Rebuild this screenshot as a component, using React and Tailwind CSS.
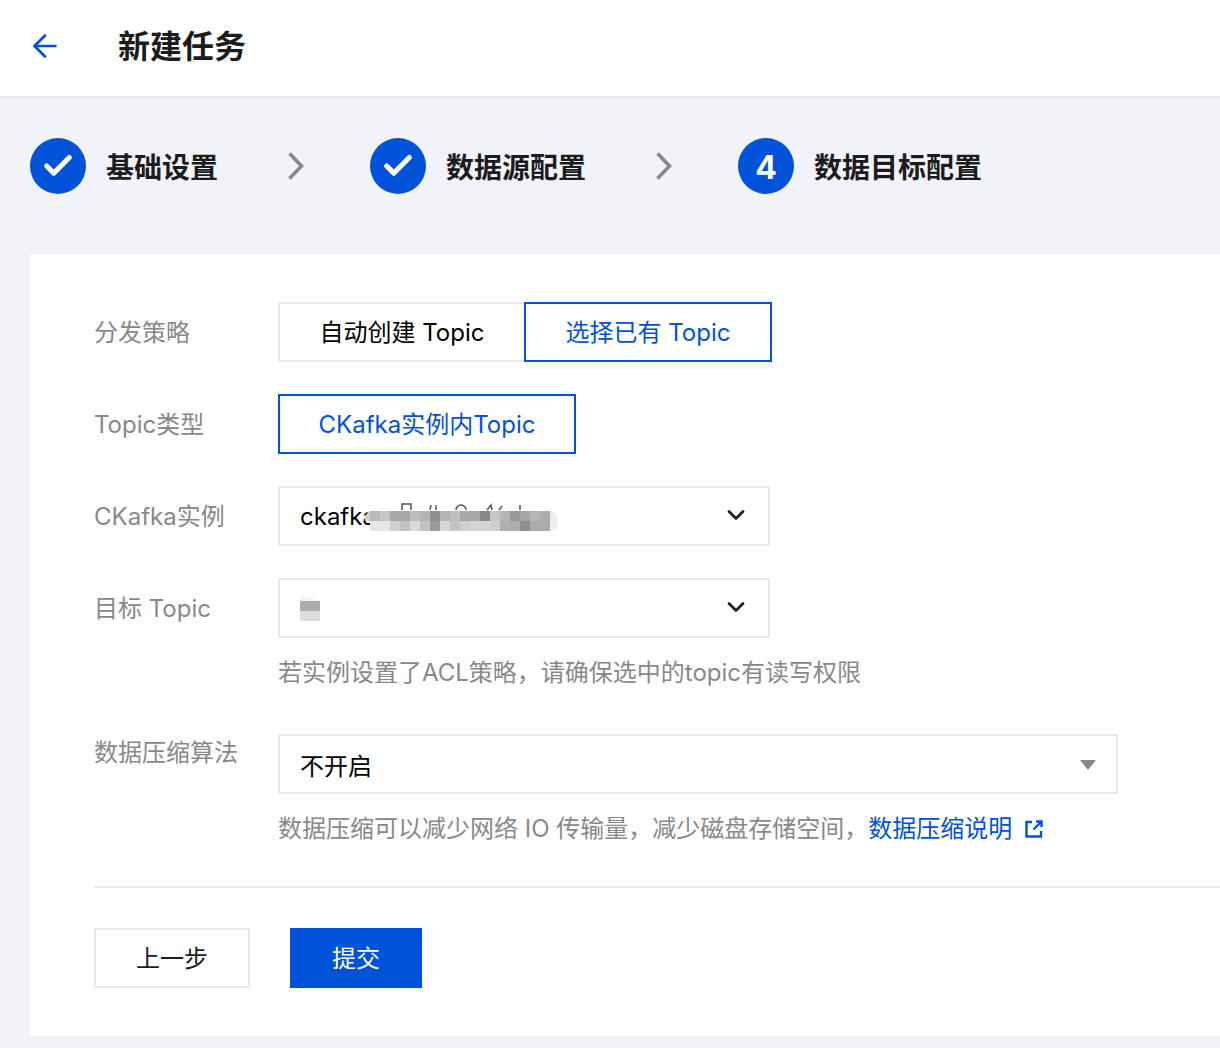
import React from 'react';
import { ArrowLeft, Check, ChevronDown } from 'lucide-react';

const FONT = "font-['Inter','Noto_Sans_CJK_SC',sans-serif]";

const mosaicTop = ['#b9b9b9', '#c6c6c6', '#a8a8a8', '#a8a8a8', '#bdbdbd', '#b4b4b4', '#909090', '#b5b5b5', '#c0c0c0', '#a9a9a9', '#a9a9a9', '#888888', '#c6c6c6', '#b5b5b5', '#9a9a9a', '#a5a5a5', '#b5b5b5', '#adadad'];
const mosaicBottom = ['#e6e6e6', '#e6e6e6', '#cfcfcf', '#c2c2c2', '#dadada', '#c2c2c2', '#9a9a9a', '#d6d6d6', '#c4c4c4', '#cfcfcf', '#d4d4d4', '#d4d4d4', '#cfcfcf', '#b0b0b0', '#adadad', '#8f8f8f', '#ababab', '#ababab'];

// pixelated redaction over the instance name
const Mosaic = () => (
    <svg width="195" height="28" viewBox="0 0 195 28" className="absolute left-[83px] top-[15px]">
        <path d="M39 7V1h9v6M67 7l1-5M73 7V2M93 7a5 5 0 0 1 10 0M124 7l4-5 1 5M136 7l3-4M157 7V2" fill="none" stroke="#555555" strokeWidth="1.5" />
        <path d="M7 8h180a8 8 0 0 1 8 8v4a8 8 0 0 1-8 8H7z" fill="#ffffff" />
        <path d="M2 18a9 9 0 0 1 5-10v10z" fill="#d0d0d0" />
        {mosaicTop.map((c, i) => <rect key={i} x={7 + i * 10} y="8" width="10" height="10" fill={c} />)}
        {mosaicBottom.map((c, i) => <rect key={i} x={7 + i * 10} y="18" width="10" height="10" fill={c} />)}
        <path d="M187 8a8 8 0 0 1 8 8v4a8 8 0 0 1-8 8z" fill="#eeeeee" />
    </svg>
);

const StepArrow = ({ className }) => (
    <svg width="16" height="28" viewBox="0 0 16 28" fill="none" stroke="#888888" strokeWidth="3.6" className={className}>
        <path d="M1.5 1.5L13.5 14L1.5 26.5" />
    </svg>
);

const Step = ({ label, num, className }) => (
    <div className={`flex items-center ${className}`}>
        <div className="w-14 h-14 rounded-full bg-[#0052d9] flex items-center justify-center text-white">
            {num ? <span className="mt-1 text-[32px] font-bold">{num}</span> : <Check size={34} strokeWidth={3.6} />}
        </div>
        <span className="ml-5 mt-1 text-[28px] font-bold text-[#1c1c1c] leading-none">{label}</span>
    </div>
);

const Row = ({ label, children, className = '', labelClass = 'h-[60px]' }) => (
    <div className={`flex ${className}`}>
        <div className={`w-[184px] pt-[2px] flex items-center text-2xl text-[#888888] shrink-0 ${labelClass}`}>{label}</div>
        <div>{children}</div>
    </div>
);

const SelectBox = ({ children }) => (
    <div className="relative w-[492px] h-[60px] border-2 border-[#e7eaef] bg-white flex items-center justify-between pl-5 pr-[18px] text-2xl text-black">
        {children}
        <ChevronDown size={28} strokeWidth={2.4} className="text-[#222222] ml-auto mb-[2px]" />
    </div>
);

export default function App() {
    return (
        <div className={`w-[1220px] h-[1048px] overflow-hidden bg-[#f2f3f8] ${FONT}`}>
            <div className="h-[98px] bg-white border-b-2 border-[#e7eaef] flex items-center pb-[2px]">
                <ArrowLeft size={36} strokeWidth={1.8} className="ml-[27px] mb-[2px] text-[#0052d9]" />
                <h1 className="ml-[55px] text-[32px] font-bold text-[#1c1c1c]">新建任务</h1>
            </div>

            {/* Steps */}
            <div className="flex items-center pl-[30px] pt-10 h-[156px] pb-[60px]">
                <Step label="基础设置" />
                <StepArrow className="ml-[70px]" />
                <Step label="数据源配置" className="ml-[66px]" />
                <StepArrow className="ml-[70px]" />
                <Step label="数据目标配置" num="4" className="ml-[66px]" />
            </div>

            {/* Form card */}
            <div className="ml-[30px] h-[782px] bg-white pl-16 pt-12">
                <Row label="分发策略" className="mb-8">
                    <div className="flex text-2xl">
                        <div className="w-[246px] h-[60px] pt-[2px] border-2 border-r-0 border-[#e7eaef] flex items-center justify-center text-black">自动创建 Topic</div>
                        <div className="w-[248px] h-[60px] pt-[2px] border-2 border-[#0052d9] flex items-center justify-center text-[#0052d9]">选择已有 Topic</div>
                    </div>
                </Row>
                <Row label="Topic类型" className="mb-8">
                    <div className="w-[298px] h-[60px] pt-[2px] border-2 border-[#0052d9] flex items-center justify-center text-2xl text-[#0052d9]">CKafka实例内Topic</div>
                </Row>
                <Row label="CKafka实例" className="mb-8">
                    <SelectBox>
                        <span className="mt-[2px]">ckafka</span>
                        <Mosaic />
                    </SelectBox>
                </Row>
                <Row label="目标 Topic" className="mb-5">
                    <SelectBox>
                        <svg width="20" height="26" viewBox="0 0 20 26" className="block">
                            <path d="M0 0l20 6v4H0z" fill="#f4f4f4" />
                            <rect x="0" y="6" width="20" height="10" fill="#ababab" />
                            <path d="M0 16h20v10H4l-4-1z" fill="#dcdcdc" />
                        </svg>
                    </SelectBox>
                    <p className="mt-5 text-2xl leading-[30px] text-[#888888]">若实例设置了ACL策略，请确保选中的topic有读写权限</p>
                </Row>
                <Row label="数据压缩算法" labelClass="h-9" className="mt-[46px]">
                    <div className="w-[840px] h-[60px] border-2 border-[#e7eaef] flex items-center justify-between pl-5 pr-[20px] text-2xl text-black">
                        <span className="mt-[6px]">不开启</span>
                        <svg width="16" height="10" viewBox="0 0 16 10" className="mt-[2px]"><path d="M0 0h16l-8 10z" fill="#888888" /></svg>
                    </div>
                    <p className="mt-5 flex items-center text-2xl leading-[30px] text-[#888888]">
                        数据压缩可以减少网络 IO 传输量，减少磁盘存储空间，
                        <span className="text-[#0052d9]">数据压缩说明</span>
                        <svg width="18" height="18" viewBox="0 0 18 18" fill="none" stroke="#0052d9" strokeWidth="2.4" className="ml-[13px]">
                            <path d="M7 2H1.5v14.5H16V11" />
                            <path d="M11 1.5h5.5V7M16 2L8.5 9.5" />
                        </svg>
                    </p>
                </Row>
                <div className="mt-[42px] h-0.5 bg-[#e7eaef]" />
                <div className="mt-10 flex">
                    <button className="w-[156px] h-[60px] pt-[2px] border-2 border-[#e7eaef] text-2xl text-[#1c1c1c]">上一步</button>
                    <button className="ml-10 w-[132px] h-[60px] pt-[2px] bg-[#0052d9] text-2xl text-white">提交</button>
                </div>
            </div>
        </div>
    );
}
